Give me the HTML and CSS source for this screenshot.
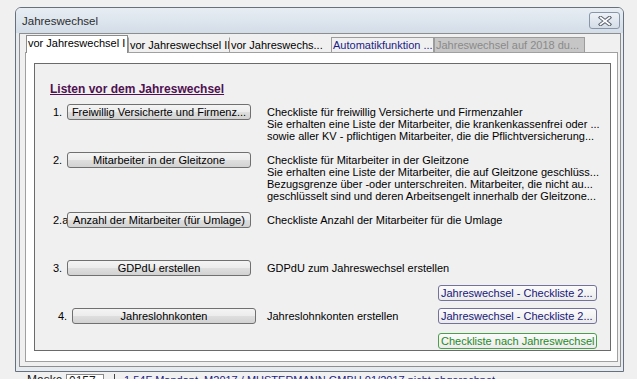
FILE: index.html
```html
<!DOCTYPE html>
<html lang="de">
<head>
    <meta charset="UTF-8">
    <title>Jahreswechsel</title>
    <link rel="stylesheet" href="styles.css">
</head>
<body>
<div class="window">
    <div class="titlebar">
        <span class="title">Jahreswechsel</span>
        <button class="close" title="Schließen">
            <svg width="14" height="10" viewBox="0 0 14 10">
                <path d="M2.5 1.5 L11.5 8.5 M11.5 1.5 L2.5 8.5" stroke="#5b6570" stroke-width="3.6" stroke-linecap="square" fill="none"/>
                <path d="M2.5 1.5 L11.5 8.5 M11.5 1.5 L2.5 8.5" stroke="#ffffff" stroke-width="1.6" stroke-linecap="square" fill="none"/>
            </svg>
        </button>
    </div>
    <div class="frame">
        <div class="tabs">
            <div class="tab active t1">vor Jahreswechsel I</div>
            <div class="tab plain t2">vor Jahreswechsel II</div>
            <div class="tab plain t3">vor Jahreswechs...</div>
            <div class="tab auto t4">Automatikfunktion ...</div>
            <div class="tab disabled t5">Jahreswechsel auf 2018 du...</div>
        </div>
        <div class="pane">
            <div class="panel">
                <div class="heading">Listen vor dem Jahreswechsel</div>

                <div class="row gap-8">
                    <div class="lead"><span class="num">1.</span><button class="btn">Freiwillig Versicherte und Firmenz...</button></div>
                    <div class="desc">Checkliste für freiwillig Versicherte und Firmenzahler<br>Sie erhalten eine Liste der Mitarbeiter, die krankenkassenfrei oder ...<br>sowie aller KV - pflichtigen Mitarbeiter, die die Pflichtversicherung...</div>
                </div>

                <div class="row gap-10">
                    <div class="lead"><span class="num">2.</span><button class="btn">Mitarbeiter in der Gleitzone</button></div>
                    <div class="desc">Checkliste für Mitarbeiter in der Gleitzone<br>Sie erhalten eine Liste der Mitarbeiter, die auf Gleitzone geschlüss...<br>Bezugsgrenze über -oder unterschreiten. Mitarbeiter, die nicht au...<br>geschlüsselt sind und deren Arbeitsengelt innerhalb der Gleitzone...</div>
                </div>

                <div class="row gap-10">
                    <div class="lead"><span class="num">2.a</span><button class="btn">Anzahl der Mitarbeiter (für Umlage)</button></div>
                    <div class="desc">Checkliste Anzahl der Mitarbeiter für die Umlage</div>
                </div>

                <div class="row gap-32">
                    <div class="lead"><span class="num">3.</span><button class="btn">GDPdU erstellen</button></div>
                    <div class="desc">GDPdU zum Jahreswechsel erstellen</div>
                </div>

                <div class="side gap-9">
                    <button class="side-btn">Jahreswechsel - Checkliste 2...</button>
                </div>

                <div class="row gap-7">
                    <div class="lead shift"><span class="num">4.</span><button class="btn">Jahreslohnkonten</button></div>
                    <div class="desc">Jahreslohnkonten erstellen</div>
                    <button class="side-btn">Jahreswechsel - Checkliste 2...</button>
                </div>

                <div class="side gap-9">
                    <button class="side-btn green">Checkliste nach Jahreswechsel</button>
                </div>
            </div>
        </div>
    </div>
</div>
<div class="status">
    <span class="mask-label">Maske</span>
    <span class="mask-box">0157<span class="arrow">&#9662;</span></span>
    <span class="sep"></span>
    <span class="company">1.54F Mandant&nbsp; M2017 / MUSTERMANN GMBH 01/2017 nicht abgerechnet</span>
</div>
</body>
</html>
```
FILE: styles.css
```css
html, body {
    overflow: hidden;
}

body {
    margin: 0;
    background: #f0f0f0;
    font-family: "Liberation Sans", Arial, sans-serif;
    font-size: 11px;
    color: #000;
}

.window {
    box-sizing: border-box;
    width: 609px;
    margin: 7px 0 0 15px;
    border: 1px solid #66717d;
    border-radius: 6px 6px 0 0;
    background: #e6ebf0;
    padding-bottom: 4px;
}

.titlebar {
    height: 25px;
    display: flex;
    align-items: center;
    padding-left: 6px;
    background: linear-gradient(#e7edf3, #d3dde8);
    border-radius: 5px 5px 0 0;
}

.title {
    font-size: 11.5px;
    color: #2d2d2d;
}

.close {
    margin: 4px 3px 0 auto;
    align-self: flex-start;
    width: 31px;
    height: 17px;
    box-sizing: border-box;
    border: 1px solid #8796a8;
    border-radius: 3px;
    background: linear-gradient(#eef2f7, #d4dde7);
    padding: 0;
    display: flex;
    align-items: center;
    justify-content: center;
}

.frame {
    margin: 0 2px 0 3px;
    border: 1px solid #8e8e8e;
    background: #f0f0f0;
    padding: 1px 2px 4px 5px;
}

/* tabs */
.tabs {
    display: flex;
    align-items: flex-end;
    height: 17px;
    margin-left: 1px;
}

.tab {
    box-sizing: border-box;
    height: 15px;
    border: 1px solid #9c9c9c;
    border-bottom: none;
    padding: 1px 0 0 1px;
    line-height: 12px;
    white-space: nowrap;
    overflow: hidden;
    background: #f0f0f0;
}

.tab.active {
    height: 18px;
    margin-bottom: -1px;
    position: relative;
    z-index: 1;
    background: #fff;
    padding: 1px 0 0 1px;
    border-color: #8c8c8c;
}

.tab.plain {
    border-top-color: transparent;
    border-right: none;
}

.tab.auto {
    color: #1c1c86;
}

.tab.disabled {
    background: #c6c6c6;
    color: #8a8a8a;
}

.t1 { width: 102px; }
.t2 { width: 101px; }
.t3 { width: 102px; }
.t4 { width: 103px; }
.t5 { width: 151px; }

.pane {
    border: 1px solid #a0a0a0;
    background: #fff;
    padding: 10px 6px 10px 8px;
}

.panel {
    border: 1px solid #6a6a6a;
    background: #f0f0f0;
    padding: 18px 13px 1px 15px;
}

.heading {
    font-size: 12px;
    font-weight: bold;
    line-height: 14px;
    color: #4f1150;
    text-decoration: underline;
}

/* rows */
.row {
    display: flex;
    align-items: flex-start;
}

.lead {
    width: 217px;
    flex-shrink: 0;
    display: flex;
}

.lead.shift {
    padding-left: 5px;
    width: 212px;
}

.num {
    width: 17px;
    box-sizing: border-box;
    padding: 0 1px 0 3px;
    line-height: 16px;
    overflow: hidden;
    white-space: nowrap;
}

.btn {
    width: 184px;
    height: 16px;
    box-sizing: border-box;
    border: 1px solid #707070;
    border-radius: 3px;
    background: linear-gradient(#f4f4f4, #ececec 50%, #dfdfdf 50%, #d2d2d2);
    font: inherit;
    line-height: 13px;
    padding: 0;
    color: #000;
    white-space: nowrap;
    overflow: hidden;
}

.desc {
    margin-top: 2px;
    line-height: 12px;
    white-space: nowrap;
}

.side {
    display: flex;
    justify-content: flex-end;
}

.side-btn {
    width: 159px;
    height: 16px;
    box-sizing: border-box;
    border: 1px solid #72729a;
    border-radius: 3px;
    background: linear-gradient(#fbfbfb, #ebebeb);
    font: inherit;
    line-height: 13px;
    padding: 0 0 0 2px;
    text-align: left;
    color: #17177a;
    white-space: nowrap;
    overflow: hidden;
}

.row .side-btn {
    margin-left: auto;
}

.side-btn.green {
    color: #1f8a1f;
    border-color: #4aa04a;
}

.gap-7 { margin-top: 7px; }
.gap-8 { margin-top: 8px; }
.gap-9 { margin-top: 9px; }
.gap-10 { margin-top: 10px; }
.gap-32 { margin-top: 32px; }

/* status line behind the dialog */
.status {
    display: flex;
    align-items: flex-start;
    margin-top: 2px;
    padding-left: 27px;
    height: 20px;
    font-size: 12px;
    line-height: 13px;
    color: #1a1a1a;
}

.mask-label {
    width: 39px;
}

.mask-box {
    display: flex;
    box-sizing: border-box;
    width: 38px;
    height: 16px;
    border: 1px solid #8a8a8a;
    padding-left: 2px;
    background: #fff;
}

.arrow {
    margin-left: auto;
    margin-right: 2px;
    color: #555;
}

.sep {
    margin-left: 10px;
    width: 1px;
    height: 14px;
    background: #444;
}

.company {
    margin-left: 9px;
    font-size: 11px;
    color: #1c1c86;
}
```
